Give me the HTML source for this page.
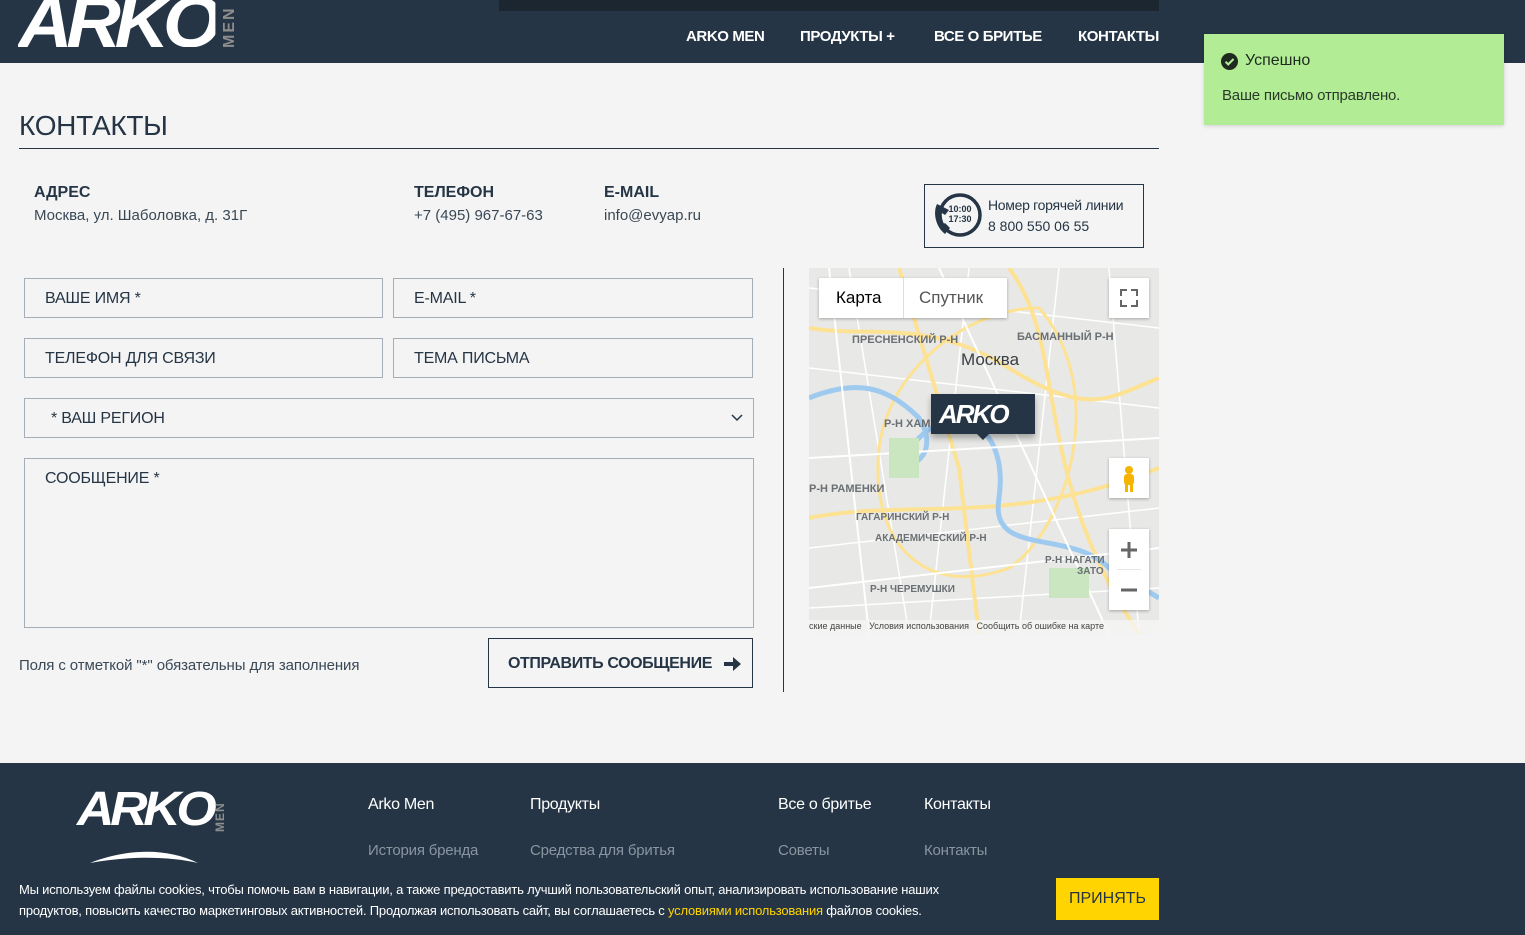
<!DOCTYPE html>
<html><head><meta charset="utf-8"><style>
*{margin:0;padding:0;box-sizing:border-box}
body{width:1525px;height:935px;overflow:hidden;background:#f4f4f4;font-family:"Liberation Sans","DejaVu Sans Condensed",sans-serif;color:#253545;position:relative}
.a{position:absolute}
.hdr{left:0;top:0;width:1525px;height:63px;background:#253545}
.nav{top:28px;color:#fff;font-weight:bold;font-size:15px;letter-spacing:-.4px}
.inp{border:1px solid #a3aeb9;height:40px;font-size:16px;padding:11px 20px;color:#253545;letter-spacing:-.2px}
.lbl{font-size:16px;font-weight:bold}
.val{font-size:15px;color:#3a4856}
.ft{color:#fff;font-size:16px;letter-spacing:-.3px}
.fl{color:#8a95a0;font-size:15px;letter-spacing:-.2px}
</style></head><body>
<div class="a hdr"></div>
<div class="a" style="left:499px;top:0;width:660px;height:11px;background:#1b2631"></div>
<div class="a" style="left:18px;top:-13px;color:#fff;font:italic 900 72px 'Liberation Sans',sans-serif;letter-spacing:-6px;line-height:72px;transform:scaleX(1.05);transform-origin:left;clip-path:inset(0 0 12px 0)">ARKO</div>
<div class="a" style="left:221px;top:-2px;width:18px;height:50px;color:#8d8d8d;font:bold 16px 'Liberation Sans',sans-serif;writing-mode:vertical-rl;transform:rotate(180deg);letter-spacing:2px">MEN</div>
<div class="a nav" style="left:686px">ARKO MEN</div>
<div class="a nav" style="left:800px">ПРОДУКТЫ +</div>
<div class="a nav" style="left:934px">ВСЕ О БРИТЬЕ</div>
<div class="a nav" style="left:1078px">КОНТАКТЫ</div>

<div class="a" style="left:1204px;top:34px;width:300px;height:91px;background:#b2ed96;box-shadow:0 1px 4px rgba(0,0,0,.15)"></div>
<svg class="a" style="left:1221px;top:53px" width="17" height="17" viewBox="0 0 16 16"><circle cx="8" cy="8" r="8" fill="#1f2a20"/><path d="M4.3 8.2l2.5 2.5 5-5" stroke="#b2ed96" stroke-width="2" fill="none"/></svg>
<div class="a" style="left:1245px;top:52px;font-size:16px;color:#1f2a20">Успешно</div>
<div class="a" style="left:1222px;top:87px;font-size:15px;color:#2a3a2a;letter-spacing:-.2px">Ваше письмо отправлено.</div>

<div class="a" style="left:19px;top:110px;font-size:28px;letter-spacing:-.3px">КОНТАКТЫ</div>
<div class="a" style="left:19px;top:148px;width:1140px;height:1px;background:#253545"></div>

<div class="a lbl" style="left:34px;top:184px">АДРЕС</div>
<div class="a val" style="left:34px;top:207px">Москва, ул. Шаболовка, д. 31Г</div>
<div class="a lbl" style="left:414px;top:184px">ТЕЛЕФОН</div>
<div class="a val" style="left:414px;top:207px">+7 (495) 967-67-63</div>
<div class="a lbl" style="left:604px;top:184px">E-MAIL</div>
<div class="a val" style="left:604px;top:207px">info@evyap.ru</div>

<div class="a" style="left:924px;top:184px;width:220px;height:64px;border:1px solid #253545"></div>
<svg class="a" style="left:932px;top:192px" width="52" height="48" viewBox="0 0 52 48"><circle cx="28" cy="23" r="20" fill="none" stroke="#253545" stroke-width="3.5"/><path d="M5 12c-4 8-2 22 8 30l5-6-5-5-3 2c-2-4-2-9 0-12l3 2 4-5z" fill="#253545"/><text x="28" y="20" font-size="9" font-weight="bold" text-anchor="middle" fill="#253545" font-family="Liberation Sans">10:00</text><text x="28" y="30" font-size="9" font-weight="bold" text-anchor="middle" fill="#253545" font-family="Liberation Sans">17:30</text></svg>
<div class="a" style="left:988px;top:197px;font-size:14px;letter-spacing:-.3px">Номер горячей линии</div>
<div class="a" style="left:988px;top:218px;font-size:14px">8 800 550 06 55</div>

<div class="a inp" style="left:24px;top:278px;width:359px">ВАШЕ ИМЯ *</div>
<div class="a inp" style="left:393px;top:278px;width:360px">E-MAIL *</div>
<div class="a inp" style="left:24px;top:338px;width:359px">ТЕЛЕФОН ДЛЯ СВЯЗИ</div>
<div class="a inp" style="left:393px;top:338px;width:360px">ТЕМА ПИСЬМА</div>
<div class="a inp" style="left:24px;top:398px;width:730px;padding-left:26px">* ВАШ РЕГИОН</div>
<svg class="a" style="left:731px;top:414px" width="12" height="8"><path d="M1 1l5 5 5-5" stroke="#253545" stroke-width="1.5" fill="none"/></svg>
<div class="a inp" style="left:24px;top:458px;width:730px;height:170px">СООБЩЕНИЕ *</div>
<div class="a" style="left:19px;top:657px;font-size:15px;color:#3a4856;letter-spacing:-.1px">Поля с отметкой "*" обязательны для заполнения</div>
<div class="a" style="left:488px;top:638px;width:265px;height:50px;border:1px solid #253545"></div>
<div class="a" style="left:508px;top:655px;font-size:16px;font-weight:bold;letter-spacing:-.4px">ОТПРАВИТЬ СООБЩЕНИЕ</div>
<svg class="a" style="left:723px;top:656px" width="19" height="16"><path d="M1 6h9V1l8 7-8 7V10H1z" fill="#253545"/></svg>
<div class="a" style="left:783px;top:268px;width:1px;height:424px;background:#253545"></div>

<div class="a" style="left:809px;top:268px;width:350px;height:366px;background:#e8e8e6;overflow:hidden">
<svg width="350" height="366" style="position:absolute;left:0;top:0">
<g stroke="#fff" stroke-width="1.5" fill="none"><path d="M0 20 L350 60 M0 100 L350 140 M0 280 L350 240 M40 0 L100 366 M250 0 L210 366 M300 0 L330 366 M0 340 L350 320 M160 0 L120 366"/></g>
<path d="M0 60 C60 70 120 50 200 100 S300 130 350 110" stroke="#fde293" stroke-width="4" fill="none"/>
<path d="M90 0 L150 200 L170 366" stroke="#fde293" stroke-width="4" fill="none"/>
<path d="M200 0 C260 80 220 200 330 366" stroke="#fde293" stroke-width="4" fill="none"/>
<path d="M0 250 C100 230 200 260 350 200" stroke="#fde293" stroke-width="4" fill="none"/>
<path d="M230 40 C300 120 260 260 200 300 C120 330 60 280 70 180 C80 100 160 40 230 40z" stroke="#fde293" stroke-width="3" fill="none"/>
<path d="M0 130 C50 110 80 120 110 150 C140 200 70 210 110 170 C150 130 200 160 190 230 C180 290 260 260 300 300 L350 330" stroke="#9ecaf0" stroke-width="5" fill="none"/>
<path d="M20 0 L60 366 M0 190 L350 170 M130 0 L300 366 M0 320 L350 280" stroke="#fff" stroke-width="2" fill="none"/>
<rect x="80" y="170" width="30" height="40" fill="#c9e6c0"/><rect x="240" y="300" width="40" height="30" fill="#c9e6c0"/>
<g font-family="Liberation Sans" font-weight="bold" font-size="11" fill="#6a6f74"><text x="43" y="75">ПРЕСНЕНСКИЙ Р-Н</text><text x="208" y="72">БАСМАННЫЙ Р-Н</text><text x="75" y="159">Р-Н ХАМ</text><text x="0" y="224">Р-Н РАМЕНКИ</text><text x="47" y="252" font-size="10">ГАГАРИНСКИЙ Р-Н</text><text x="66" y="273" font-size="10">АКАДЕМИЧЕСКИЙ Р-Н</text><text x="236" y="295" font-size="10">Р-Н НАГАТИ</text><text x="268" y="306" font-size="10">ЗАТО</text><text x="61" y="324" font-size="10">Р-Н ЧЕРЕМУШКИ</text></g>
<text x="152" y="97" font-family="Liberation Sans" font-size="17" fill="#3a3f44">Москва</text>
</svg>
<div class="a" style="left:10px;top:10px;width:188px;height:40px;background:#fff;box-shadow:0 1px 3px rgba(0,0,0,.3);font:17px 'Liberation Sans',sans-serif"><span class="a" style="left:17px;top:10px;color:#000">Карта</span><span class="a" style="left:84px;top:0;width:1px;height:40px;background:#ddd"></span><span class="a" style="left:100px;top:10px;color:#565656">Спутник</span></div>
<div class="a" style="left:300px;top:10px;width:40px;height:40px;background:#fff;box-shadow:0 1px 3px rgba(0,0,0,.3)"><svg width="40" height="40"><path d="M12 18v-6h6M22 12h6v6M28 22v6h-6M18 28h-6v-6" stroke="#666" stroke-width="2" fill="none"/></svg></div>
<div class="a" style="left:122px;top:126px;width:104px;height:40px;background:#253545;color:#fff;font:italic 900 26px 'Liberation Sans',sans-serif;letter-spacing:-2px;padding:5px 0 0 8px;box-shadow:0 4px 6px rgba(0,0,0,.3)">ARKO</div>
<div class="a" style="left:168px;top:166px;border:6px solid transparent;border-top-color:#253545"></div>
<div class="a" style="left:300px;top:190px;width:40px;height:40px;background:#fff;box-shadow:0 1px 3px rgba(0,0,0,.3)"><svg width="40" height="40"><circle cx="20" cy="12" r="4" fill="#f5b400"/><rect x="15" y="16" width="10" height="11" rx="3" fill="#f5b400"/><rect x="16" y="26" width="3" height="8" fill="#f5b400"/><rect x="21" y="26" width="3" height="8" fill="#f5b400"/></svg></div>
<div class="a" style="left:300px;top:261px;width:40px;height:81px;background:#fff;box-shadow:0 1px 3px rgba(0,0,0,.3)"><svg width="40" height="81"><path d="M20 13v16M12 21h16M12 61h16" stroke="#666" stroke-width="3"/><path d="M8 40.5h24" stroke="#e6e6e6"/></svg></div>
<div class="a" style="left:0;top:352px;width:350px;height:14px;background:rgba(245,245,245,.8);font:9px 'Liberation Sans',sans-serif;color:#444;padding-top:1px;white-space:nowrap">ские данные &nbsp; Условия использования &nbsp; Сообщить об ошибке на карте</div>
</div>

<div class="a" style="left:0;top:763px;width:1525px;height:172px;background:#253545"></div>
<div class="a" style="left:77px;top:782px;color:#fff;font:italic 900 48px 'Liberation Sans',sans-serif;letter-spacing:-4px;transform:scaleX(1.08);transform-origin:left">ARKO</div>
<div class="a" style="left:213px;top:792px;width:16px;height:40px;color:#8d8d8d;font:bold 12px 'Liberation Sans',sans-serif;writing-mode:vertical-rl;transform:rotate(180deg);letter-spacing:1px">MEN</div>
<svg class="a" style="left:88px;top:850px" width="112" height="14"><path d="M2 13C40 -2 80 -2 110 13C80 6 40 6 2 13z" fill="#fff"/></svg>
<div class="a ft" style="left:368px;top:796px">Arko Men</div>
<div class="a ft" style="left:530px;top:796px">Продукты</div>
<div class="a ft" style="left:778px;top:796px">Все о бритье</div>
<div class="a ft" style="left:924px;top:796px">Контакты</div>
<div class="a fl" style="left:368px;top:842px">История бренда</div>
<div class="a fl" style="left:530px;top:842px">Средства для бритья</div>
<div class="a fl" style="left:778px;top:842px">Советы</div>
<div class="a fl" style="left:924px;top:842px">Контакты</div>
<div class="a" style="left:0;top:868px;width:1525px;height:67px;background:#253545"></div>
<div class="a" style="left:19px;top:880px;width:975px;color:#fff;font-size:13px;line-height:20.5px;letter-spacing:-.2px">Мы используем файлы cookies, чтобы помочь вам в навигации, а также предоставить лучший пользовательский опыт, анализировать использование наших продуктов, повысить качество маркетинговых активностей. Продолжая использовать сайт, вы соглашаетесь с <span style="color:#ffd400">условиями использования</span> файлов cookies.</div>
<div class="a" style="left:1056px;top:878px;width:103px;height:42px;background:#ffd400;color:#253545;font-size:16px;padding-top:12px;text-align:center">ПРИНЯТЬ</div>
</body></html>
